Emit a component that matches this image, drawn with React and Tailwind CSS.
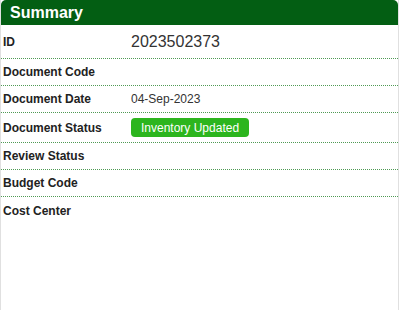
import React from 'react';

const rows = [
  { label: 'Document Code' },
  { label: 'Document Date', value: '04-Sep-2023' },
  { label: 'Document Status', badge: 'Inventory Updated' },
  { label: 'Review Status' },
  { label: 'Budget Code' },
  { label: 'Cost Center', last: true },
];

export default function App() {
  return (
    <div className="w-[400px] h-[310px] bg-white font-['Liberation_Sans',Arial,sans-serif]">
      <div className="w-[399px] h-[310px] border-x border-[#e0e0e0] flex flex-col">
        <div className="h-[25px] bg-[#035e13] rounded-t-[5px] flex items-center px-[9px]">
          <span className="text-white font-bold text-[16px] leading-none">Summary</span>
        </div>

        <div className="flex items-center h-[34px] border-b border-dotted border-[#4f9a55]">
          <div className="w-[130px] pl-[2px] text-[12px] font-bold text-[#222]">ID</div>
          <div className="text-[16px] text-[#333] pt-[1px]">2023502373</div>
        </div>

        {rows.map((r) => (
          <div
            key={r.label}
            className={
              'flex items-center ' +
              (r.badge ? 'h-[30px] ' : 'h-[27px] ') +
              (r.last ? '' : 'border-b border-dotted border-[#4f9a55]')
            }
          >
            <div className="w-[130px] pl-[2px] text-[12px] font-bold text-[#222]">{r.label}</div>
            {r.value && <div className="text-[12px] text-[#333]">{r.value}</div>}
            {r.badge && (
              <div className="bg-[#2cb51e] text-white text-[12px] rounded-[4px] px-[10px] h-[19px] flex items-center">
                {r.badge}
              </div>
            )}
          </div>
        ))}
      </div>
    </div>
  );
}
